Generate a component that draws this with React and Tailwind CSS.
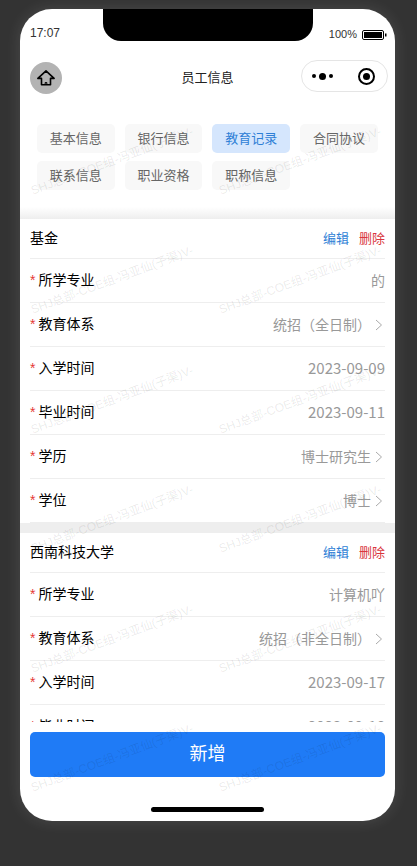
const FONT = "font-['Liberation_Sans','Noto_Sans_CJK_SC',sans-serif]";

const tabs = ["基本信息", "银行信息", "教育记录", "合同协议", "联系信息", "职业资格", "职称信息"];

const records = [
  {
    title: "基金",
    rows: [
      { label: "所学专业", value: "的" },
      { label: "教育体系", value: "统招（全日制）", arrow: true },
      { label: "入学时间", value: "2023-09-09", date: true },
      { label: "毕业时间", value: "2023-09-11", date: true },
      { label: "学历", value: "博士研究生", arrow: true },
      { label: "学位", value: "博士", arrow: true },
    ],
  },
  {
    title: "西南科技大学",
    rows: [
      { label: "所学专业", value: "计算机吖" },
      { label: "教育体系", value: "统招（非全日制）", arrow: true },
      { label: "入学时间", value: "2023-09-17", date: true },
      { label: "毕业时间", value: "2023-09-18", date: true },
    ],
  },
];

const Chevron = () => (
  <svg width="8" height="12" viewBox="0 0 8 12" fill="none" className="ml-[4px] mr-[2px] shrink-0">
    <path d="M1 1l5.5 5L1 11" stroke="#aaa" strokeWidth="1" />
  </svg>
);

const Row = ({ label, value, arrow, date }) => (
  <div className="flex h-[44px] items-center justify-between border-b border-[#eeeeee] text-[14px]">
    <span className="text-black">
      <span className="mr-[3px] text-[#e53935]">*</span>
      {label}
    </span>
    <span className={`flex items-center font-['Noto_Sans_CJK_SC',sans-serif] text-[#999999] ${date ? "text-[15px]" : ""}`}>
      {value}
      {arrow && <Chevron />}
    </span>
  </div>
);

const Record = ({ title, rows }) => (
  <div className="px-[10px]">
    <div className="flex h-[40px] items-center justify-between border-b border-[#eeeeee]">
      <span className="text-[14px] text-black">{title}</span>
      <span className="flex gap-[10px] text-[13px]">
        <span className="text-[#2f7fd6]">编辑</span>
        <span className="text-[#d9363e]">删除</span>
      </span>
    </div>
    {rows.map((r) => (
      <Row key={r.label} {...r} />
    ))}
  </div>
);

const Watermarks = () => (
  <div className="pointer-events-none absolute left-[-2px] top-[92px] z-20 grid w-[376px] grid-cols-2">
    {Array.from({ length: 12 }).map((_, i) => (
      <div key={i} className="flex h-[119.5px] items-center justify-center overflow-visible">
        <span className="-rotate-[20.5deg] whitespace-nowrap text-[12px] text-black/[0.09]">
          SHJ总部-COE组-冯亚仙(子渠)V-
        </span>
      </div>
    ))}
  </div>
);

export default function App() {
  return (
    <div className={`${FONT} h-[866px] w-[417px] overflow-hidden bg-[#333333] pl-[20px] pt-[9px]`}>
      <div className="relative flex h-[812px] w-[375px] flex-col overflow-hidden rounded-[32px] bg-white shadow-[0_0_16px_rgba(255,255,255,0.12)]">
        <div className="absolute left-[83px] top-0 h-[32px] w-[210px] rounded-b-[18px] bg-black" />

        <div className="flex h-[46px] shrink-0 items-center justify-between pl-[10px] pr-[8px] pt-[1px] text-[#333333]">
          <span className="text-[12px]">17:07</span>
          <span className="flex items-center gap-[5px] pt-[4px] text-[11px]">
            100%
            <svg width="25" height="10" viewBox="0 0 25 10">
              <rect x="0.5" y="0.5" width="21" height="9" rx="1.5" fill="none" stroke="#000" />
              <rect x="2" y="2" width="18" height="6" fill="#000" />
              <rect x="23" y="3.5" width="1.5" height="3" fill="#000" />
            </svg>
          </span>
        </div>

        <div className="relative flex h-[44px] shrink-0 items-center justify-between pl-[10px] pr-[7px]">
          <div className="mt-[2px] flex h-[32px] w-[32px] items-center justify-center rounded-full bg-[#b3b3b3]">
            <svg width="18" height="18" viewBox="0 0 18 18" fill="none">
              <path d="M9 1.8L0.9 9.4h3.6v6.4h9V9.4h3.6L9 1.8z" stroke="#000" strokeWidth="1.6" strokeLinejoin="round" />
              <path d="M8.2 15.5v-2h1.6v2" stroke="#000" strokeWidth="1" />
            </svg>
          </div>
          <span className="absolute left-0 right-0 mt-[2px] text-center text-[13px] text-[#222222]">员工信息</span>
          <div className="relative mb-[2px] flex h-[32px] w-[87px] items-center justify-between rounded-full border border-[#e5e5e5] pl-[10px] pr-[12px]">
            <span className="flex items-center gap-[3px]">
              <i className="h-[4px] w-[4px] rounded-full bg-black" />
              <i className="h-[7px] w-[7px] rounded-full bg-black" />
              <i className="h-[4px] w-[4px] rounded-full bg-black" />
            </span>
            <span className="flex h-[17px] w-[17px] items-center justify-center rounded-full border-2 border-black">
              <i className="h-[7px] w-[7px] rounded-full bg-black" />
            </span>
          </div>
        </div>

        <div className="min-h-0 flex-1 overflow-hidden">
          <div className="flex flex-wrap gap-x-[10px] gap-y-[8px] pb-[17px] pl-[17px] pt-[25px]">
            {tabs.map((t) => (
              <span
                key={t}
                className={`flex h-[29px] w-[77.7px] items-center justify-center rounded-[5px] text-[13px] ${
                  t === "教育记录" ? "bg-[#d5e6fd] text-[#2f7fd6]" : "bg-[#f8f8f8] text-[#666666]"
                }`}
              >
                {t}
              </span>
            ))}
          </div>
          {records.map((r, i) => (
            <div key={r.title}>
              <div className={i === 0 ? "h-[12px] bg-gradient-to-b from-white to-[#eeeeee]" : "h-[10px] bg-[#eeeeee]"} />
              <Record {...r} />
            </div>
          ))}
        </div>

        <div className="shrink-0 px-[10px] pt-[10px]">
          <div className="flex h-[45px] items-center justify-center rounded-[5px] bg-[#1f7bf6] text-[18px] text-white">
            新增
          </div>
          <div className="mx-auto mb-[9px] mt-[30px] h-[5px] w-[113px] rounded-full bg-black" />
        </div>

        <Watermarks />
      </div>
    </div>
  );
}
